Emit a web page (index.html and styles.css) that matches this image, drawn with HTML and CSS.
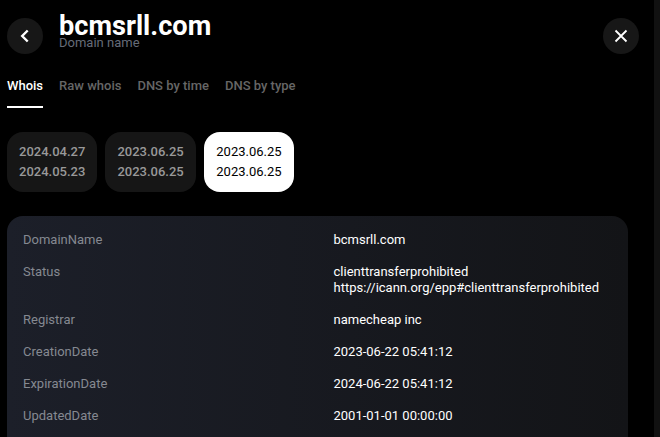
FILE: index.html
```html
<!DOCTYPE html>
<html>
<head lang="en">
    <meta charset="UTF-8">
    <title>bcmsrll.com</title>
    <link rel="stylesheet" href="styles.css">
</head>
<body>
    <div class="scrollbar"></div>
    <section class="wrapper">
        <header class="top">
            <a href="#" class="round">
                <svg width="12" height="14" viewBox="0 0 12 14"><path d="M8.7 1.5 3.2 7l5.5 5.5" fill="none" stroke="#fff" stroke-width="2.4"/></svg>
            </a>
            <div class="head">
                <h1>bcmsrll.com</h1>
                <p>Domain name</p>
            </div>
            <a href="#" class="round">
                <svg width="14" height="14" viewBox="0 0 14 14"><path d="M1.5 1.5l11 11M12.5 1.5l-11 11" fill="none" stroke="#fff" stroke-width="1.8"/></svg>
            </a>
        </header>
        <nav class="tabs">
            <a href="#" class="active">Whois</a>
            <a href="#">Raw whois</a>
            <a href="#">DNS by time</a>
            <a href="#">DNS by type</a>
        </nav>
        <div class="dates">
            <a href="#" class="date"><span>2024.04.27</span><span>2024.05.23</span></a>
            <a href="#" class="date"><span>2023.06.25</span><span>2023.06.25</span></a>
            <a href="#" class="date active"><span>2023.06.25</span><span>2023.06.25</span></a>
        </div>
        <div class="card">
            <div class="row"><span class="key">DomainName</span><span class="val">bcmsrll.com</span></div>
            <div class="row"><span class="key">Status</span><span class="val">clienttransferprohibited<br>https://icann.org/epp#clienttransferprohibited</span></div>
            <div class="row"><span class="key">Registrar</span><span class="val">namecheap inc</span></div>
            <div class="row"><span class="key">CreationDate</span><span class="val">2023-06-22 05:41:12</span></div>
            <div class="row"><span class="key">ExpirationDate</span><span class="val">2024-06-22 05:41:12</span></div>
            <div class="row"><span class="key">UpdatedDate</span><span class="val">2001-01-01 00:00:00</span></div>
        </div>
    </section>
</body>
</html>
```
FILE: styles.css
```css
body{
    margin: 0;
    display: flex;
    height: 437px;
    overflow: hidden;
    background-color: #000000;
    font-family: Roboto, "Liberation Sans", sans-serif;
    font-size: 13px;
    color: #ffffff;
}
a{
    text-decoration: none;
    color: inherit;
}
.wrapper{
    order: 1;
    flex: 1;
    min-width: 0;
    display: flex;
    flex-direction: column;
    padding: 18px 26px 0 7px;
}
.scrollbar{
    order: 2;
    width: 6px;
    background-color: #111111;
}
.top{
    display: flex;
    align-items: flex-start;
    height: 36px;
    margin-right: -11px;
}
.round{
    display: flex;
    align-items: center;
    justify-content: center;
    flex: none;
    width: 36px;
    height: 36px;
    border-radius: 50%;
    background-color: #171717;
}
.head{
    flex: 1;
    margin: -6px 0 0 16px;
}
.head h1{
    margin: 0;
    font-size: 27.2px;
    line-height: 29px;
    font-weight: 700;
}
.head p{
    margin: -6px 0 0;
    font-size: 13px;
    line-height: 15px;
    color: #666c78;
}
.tabs{
    display: flex;
    gap: 16px;
    margin-top: 22px;
}
.tabs a{
    height: 30px;
    padding-top: 2px;
    line-height: 16px;
    font-weight: 500;
    color: #666666;
}
.tabs a.active{
    height: 28px;
    color: #ffffff;
    border-bottom: 2px solid #ffffff;
}
.dates{
    display: flex;
    gap: 8px;
    margin-top: 24px;
}
.date{
    display: flex;
    flex-direction: column;
    gap: 5px;
    align-items: center;
    justify-content: center;
    width: 90.4px;
    height: 60px;
    padding-bottom: 1px;
    box-sizing: border-box;
    border-radius: 16px;
    background-color: #161616;
    line-height: 15px;
    font-weight: 500;
    color: #999999;
}
.date.active{
    background-color: #ffffff;
    font-weight: 400;
    color: #000000;
}
.card{
    flex: 1;
    margin-top: 24px;
    padding: 8px 16px 0;
    border-radius: 16px 16px 0 0;
    background: linear-gradient(90deg, #1c1f29, #131417);
}
.row{
    display: flex;
    padding: 8px 0;
    line-height: 16px;
}
.key{
    flex: none;
    width: 310.5px;
    color: #858991;
}
.val{
    color: #ffffff;
}
```
